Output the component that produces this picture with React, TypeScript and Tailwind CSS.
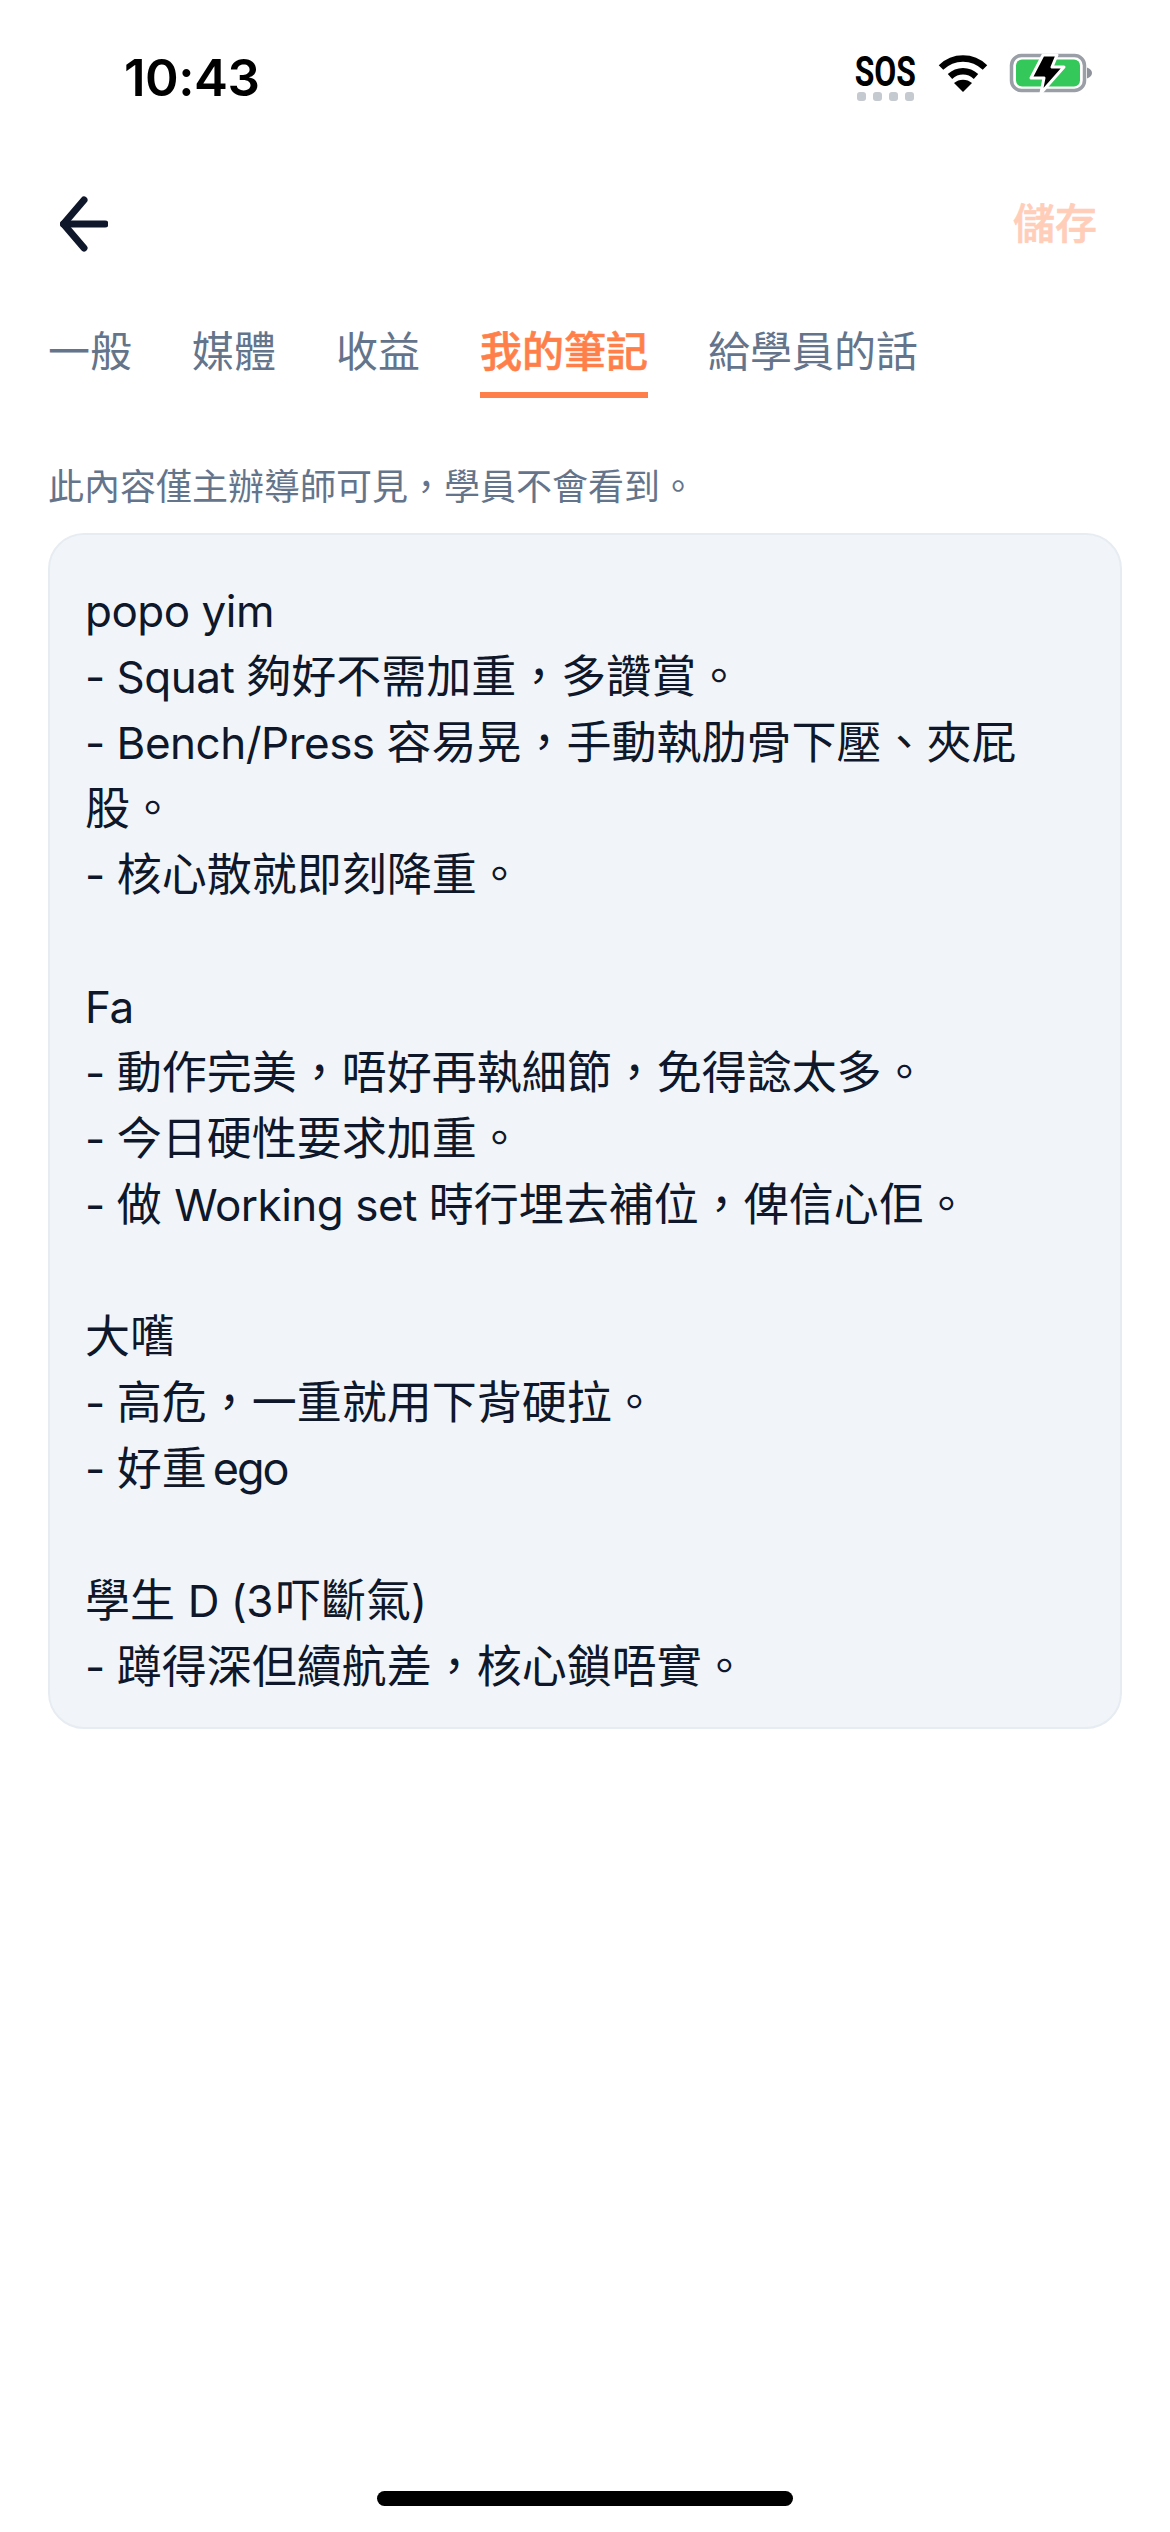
import React from 'react';

const tabs = ['一般', '媒體', '收益', '我的筆記', '給學員的話'];

// latin runs sit a bit tighter than the CJK glyphs in the reference
const L: React.FC<{ children: React.ReactNode }> = ({ children }) => (
  <span className="text-[44px] tracking-[-0.5px]">{children}</span>
);

const StatusBar: React.FC = () => (
  <div className="flex h-[150px] items-start justify-between pl-[124px] pr-[78px] pt-[50px]">
    <span className="text-[51px] leading-[56px] font-semibold tracking-[-0.5px] text-black">10:43</span>
    <div className="flex items-start pt-[4px]">
      <div className="mr-[22px] flex w-[62px] flex-col items-center">
        <span className="origin-top scale-x-[0.76] text-[42px] leading-[36px] font-bold text-black [font-family:Roboto,sans-serif]">SOS</span>
        <div className="mt-[2px] flex gap-[7px]">
          <span className="h-[9px] w-[9px] rounded-[3px] bg-[#c5c9d0]" />
          <span className="h-[9px] w-[9px] rounded-[3px] bg-[#c5c9d0]" />
          <span className="h-[9px] w-[9px] rounded-[3px] bg-[#c5c9d0]" />
          <span className="h-[9px] w-[9px] rounded-[3px] bg-[#c5c9d0]" />
        </div>
      </div>
      <svg width="50" height="38" viewBox="0 0 50 38" className="mr-[22px]">
        <path d="M3 13.5C15.5 1.5 34.5 1.5 47 13.5" fill="none" stroke="#000" strokeWidth="6.5" />
        <path d="M12 22.5C19.5 15.5 30.5 15.5 38 22.5" fill="none" stroke="#000" strokeWidth="6.5" />
        <path d="M25 38L16 29C21 24.5 29 24.5 34 29Z" fill="#000" />
      </svg>
      <svg width="82" height="40" viewBox="0 0 82 40" className="overflow-visible">
        <rect x="1.5" y="1.5" width="73" height="35" rx="10" fill="none" stroke="#9a9ea6" strokeWidth="3.5" />
        <rect x="6" y="5.5" width="64" height="27" rx="6" fill="#34c759" />
        <path d="M77 13.5C80 14.5 82 16.5 82 19C82 21.5 80 23.5 77 24.5Z" fill="#8e929a" />
        <path d="M33 1H47L42 13H54L31 39L34 24H21Z" fill="#000" stroke="#fff" strokeWidth="3" strokeLinejoin="round" />
      </svg>
    </div>
  </div>
);

export default function App() {
  return (
    <div className="flex min-h-[2532px] flex-col bg-white text-[#0f172a] [font-family:Inter,'Noto_Sans_CJK_TC',sans-serif]">
      <StatusBar />

      {/* Header */}
      <div className="flex items-center justify-between pl-[60px] pr-[73px] pt-[46px]">
        <svg width="48" height="56" viewBox="0 0 48 56" fill="none" stroke="#0f172a" strokeWidth="7" strokeLinecap="round" strokeLinejoin="round">
          <path d="M24 4L3.5 28L24 52" />
          <path d="M3.5 28H45" />
        </svg>
        <span className="text-[42px] leading-[56px] font-medium text-[#ffcdb8] [-webkit-text-stroke:0.6px_#ffcdb8]">儲存</span>
      </div>

      {/* Tabs */}
      <div className="mt-[72px] flex gap-[60px] px-[48px]">
        {tabs.map((t) => (
          <div
            key={t}
            className={
              t === '我的筆記'
                ? 'h-[74px] border-b-[6px] border-[#ff7f4a] text-[42px] leading-[56px] font-medium text-[#ff7f4a] [-webkit-text-stroke:0.6px_#ff7f4a]'
                : 'h-[74px] text-[42px] leading-[56px] text-[#64748b]'
            }
          >
            {t}
          </div>
        ))}
      </div>

      <p className="mt-[65px] px-[48px] text-[36px] leading-[48px] text-[#64748b]">此內容僅主辦導師可見，學員不會看到。</p>

      {/* Note */}
      <div className="mx-[48px] mt-[22px] rounded-[36px] border-[2px] border-[#e7ecf2] bg-[#f1f5f9] pl-[35px] pr-[100px] pt-[43px] pb-[27px] text-[45px] leading-[66px]">
        <div><L>popo yim</L></div>
        <div><L>- Squat </L>夠好不需加重，多讚賞。</div>
        <div><L>- Bench/Press </L>容易晃，手動執肋骨下壓、夾屁股。</div>
        <div><L>- </L>核心散就即刻降重。</div>
        <div className="h-[66px]" />
        <div><L>Fa</L></div>
        <div><L>- </L>動作完美，唔好再執細節，免得諗太多。</div>
        <div><L>- </L>今日硬性要求加重。</div>
        <div><L>- </L>做 <L>Working set </L>時行埋去補位，俾信心佢。</div>
        <div className="h-[66px]" />
        <div>大嚿</div>
        <div><L>- </L>高危，一重就用下背硬拉。</div>
        <div><L>- </L>好重<span className="ml-[6px] tracking-[-2px]">ego</span></div>
        <div className="h-[66px]" />
        <div>學生 <L>D (3</L><span className="ml-[3px]">吓</span>斷氣<L>)</L></div>
        <div><L>- </L>蹲得深但續航差，核心鎖唔實。</div>
      </div>

      <div className="mt-auto mb-[26px] h-[15px] w-[416px] self-center rounded-full bg-black" />
    </div>
  );
}
